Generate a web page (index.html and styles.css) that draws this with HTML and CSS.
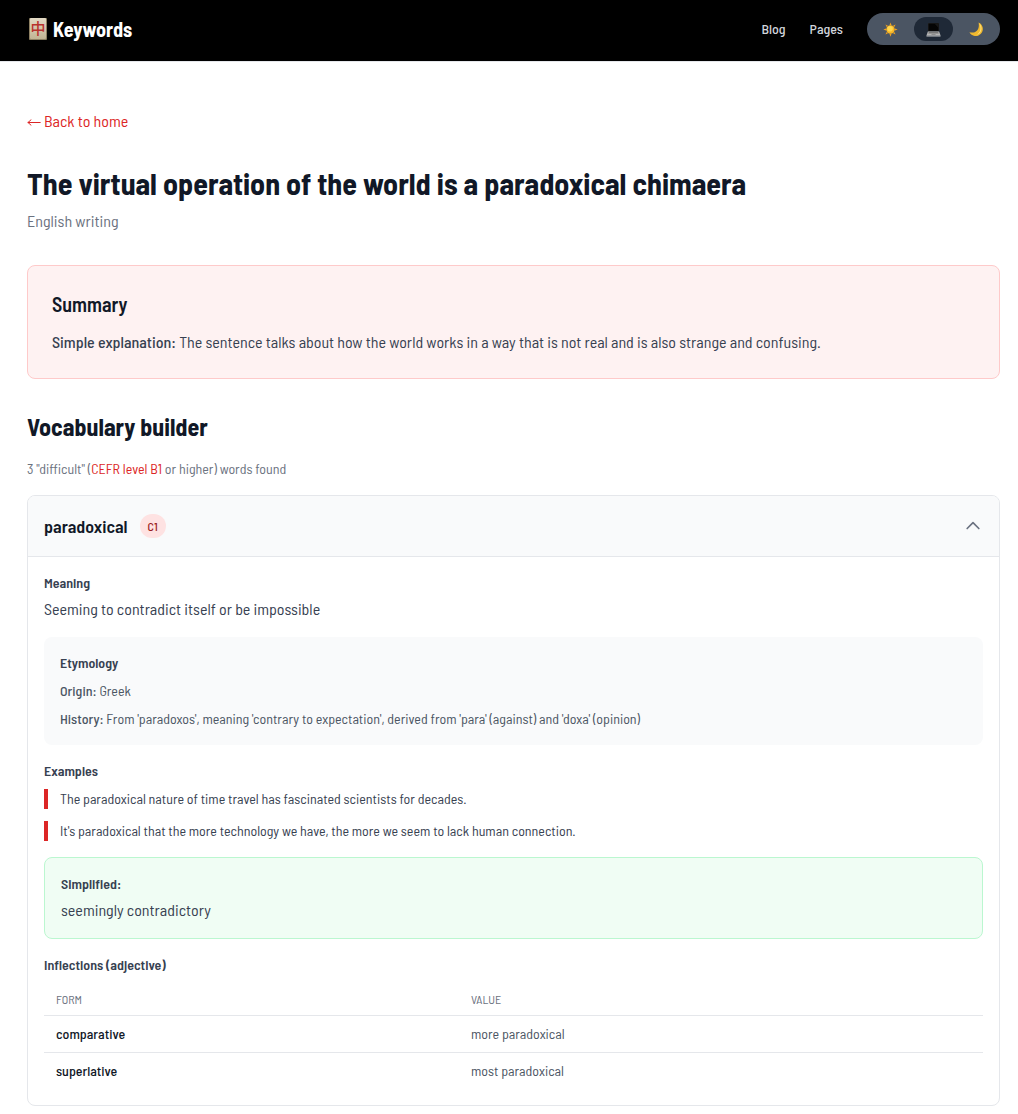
FILE: index.html
```html
<!DOCTYPE html>
<html lang="en">
<head>
    <meta charset="UTF-8">
    <meta name="viewport" content="width=device-width, initial-scale=1.0">
    <title>The virtual operation of the world is a paradoxical chimaera</title>
    <link rel="stylesheet" href="styles.css">
</head>
<body>
    <header class="site-header">
        <a href="#" class="brand">
            <svg class="brand-tile" viewBox="0 0 18 22" aria-hidden="true">
                <defs>
                    <linearGradient id="tile" x1="0" y1="0" x2="0" y2="1">
                        <stop offset="0" stop-color="#e2d9c4"/>
                        <stop offset="1" stop-color="#c2b494"/>
                    </linearGradient>
                </defs>
                <rect width="18" height="22" rx="1" fill="#8d8063"/>
                <rect x="1" width="16" height="21" rx="1" fill="url(#tile)"/>
                <text x="9" y="16" text-anchor="middle" class="tile-text">中</text>
            </svg>
            <span>Keywords</span>
        </a>
        <nav class="nav">
            <a href="#">Blog</a>
            <a href="#">Pages</a>
            <div class="theme-toggle">
                <button type="button" aria-label="Light theme">
                    <svg viewBox="0 0 16 16" aria-hidden="true">
                        <g fill="#f2a01c">
                            <path d="M8 .4l1 2.8H7zM8 15.6l1-2.8H7zM.4 8l2.8 1V7zM15.6 8l-2.8 1V7z"/>
                            <path d="M2.6 2.6l2.7 1.3-1.4 1.4zM13.4 2.6l-1.3 2.7-1.4-1.4zM2.6 13.4l1.3-2.7 1.4 1.4zM13.4 13.4l-2.7-1.3 1.4-1.4z"/>
                        </g>
                        <circle cx="8" cy="8" r="4.5" fill="#f9b625"/>
                        <circle cx="7.5" cy="7.2" r="3" fill="#ffd84e"/>
                    </svg>
                </button>
                <button type="button" class="active" aria-label="System theme" aria-pressed="true">
                    <svg viewBox="0 0 16 16" aria-hidden="true">
                        <rect x="2" y="1" width="12" height="9" rx="1" fill="#303030"/>
                        <rect x="2.5" y="1.5" width="11" height="8" fill="#050505"/>
                        <path d="M9 1.5h4.5v5z" fill="#181818"/>
                        <path d="M2 10h12l1.5 4.5H.5z" fill="#b5b5b5"/>
                        <path d="M3 10.6h10l.6 1.7H2.4z" fill="#777"/>
                        <path d="M6 12.9h4l.3 1H5.7z" fill="#8e8e8e"/>
                        <path d="M.5 14.5h15v.9H.5z" fill="#dadada"/>
                    </svg>
                </button>
                <button type="button" aria-label="Dark theme">
                    <svg viewBox="0 0 16 16" aria-hidden="true">
                        <path d="M10.2.6a7.5 7.5 0 1 1-9.7 10.2c5.7 2.1 11.4-2.2 9.7-10.2z" fill="#f0b92f"/>
                        <path d="M10.8 1.3c4.4 4 2.7 11.3-3 12.5 4.8-2.7 5.7-7.3 3-12.5z" fill="#ffe486"/>
                    </svg>
                </button>
            </div>
        </nav>
    </header>

    <main class="content">
        <a href="#" class="back-link">
            <svg viewBox="0 0 14 10" fill="none" stroke="currentColor" aria-hidden="true">
                <path d="M.8 6.5h12.8M4 3.5q-1 2-3.200 3 2.200 1 3.200 3"/>
            </svg>
            Back to home
        </a>
        <h1>The virtual operation of the world is a paradoxical chimaera</h1>
        <p class="category">English writing</p>

        <section class="summary">
            <h2>Summary</h2>
            <p><strong>Simple explanation:</strong> The sentence talks about how the world works in a way that is not real and is also strange and confusing.</p>
        </section>

        <h2 class="section-title">Vocabulary builder</h2>
        <p class="word-count">3 "difficult" (<a href="#">CEFR level B1</a> or higher) words found</p>

        <article class="word-card">
            <button type="button" class="word-header" aria-expanded="true" aria-controls="paradoxical">
                <span class="word">paradoxical</span>
                <span class="level">C1</span>
                <svg class="chevron" viewBox="0 0 24 24" fill="none" stroke="currentColor" stroke-width="2" stroke-linecap="round" stroke-linejoin="round" aria-hidden="true">
                    <path d="M5 15l7-7 7 7"/>
                </svg>
            </button>
            <div class="word-body" id="paradoxical">
                <section>
                    <h3>Meaning</h3>
                    <p>Seeming to contradict itself or be impossible</p>
                </section>

                <section class="etymology">
                    <h3>Etymology</h3>
                    <p><strong>Origin:</strong> Greek</p>
                    <p><strong>History:</strong> From 'paradoxos', meaning 'contrary to expectation', derived from 'para' (against) and 'doxa' (opinion)</p>
                </section>

                <section class="examples">
                    <h3>Examples</h3>
                    <ul>
                        <li>The paradoxical nature of time travel has fascinated scientists for decades.</li>
                        <li>It's paradoxical that the more technology we have, the more we seem to lack human connection.</li>
                    </ul>
                </section>

                <section class="simplified">
                    <h3>Simplified:</h3>
                    <p>seemingly contradictory</p>
                </section>

                <section class="inflections">
                    <h3>Inflections (adjective)</h3>
                    <table>
                        <thead>
                            <tr><th scope="col">Form</th><th scope="col">Value</th></tr>
                        </thead>
                        <tbody>
                            <tr><th scope="row">comparative</th><td>more paradoxical</td></tr>
                            <tr><th scope="row">superlative</th><td>most paradoxical</td></tr>
                        </tbody>
                    </table>
                </section>
            </div>
        </article>
    </main>
</body>
</html>
```
FILE: styles.css
```css
* {
    box-sizing: border-box;
}

body {
    margin: 0;
    font-family: "Barlow Semi Condensed", "DejaVu Sans", sans-serif;
    font-size: 16px;
    line-height: 24px;
    color: #374151;
    background-color: #fff;
}

h1, h2, h3, p, ul {
    margin: 0;
    padding: 0;
}

a {
    color: #dc2626;
    text-decoration: none;
}

button {
    font: inherit;
    border: none;
    cursor: pointer;
}

strong {
    font-weight: 500;
}

/* Header */
.site-header {
    display: flex;
    justify-content: space-between;
    align-items: center;
    min-height: 62px;
    padding: 12px 18px 15px 29px;
    background-color: #000;
    border-bottom: 1px solid #e5e7eb;
}

.brand {
    display: flex;
    align-items: center;
    gap: 6px;
    color: #fff;
    font-size: 20px;
    font-weight: 700;
}

.brand-tile {
    width: 18px;
    height: 22px;
}

.tile-text {
    font-family: "Noto Sans CJK SC", sans-serif;
    font-size: 15px;
    font-weight: 500;
    fill: #b8322d;
}

.nav {
    display: flex;
    align-items: center;
    gap: 24px;
    font-size: 14px;
}

.nav a {
    color: #d1d5db;
    font-weight: 500;
}

.theme-toggle {
    display: flex;
    gap: 4px;
    padding: 4px;
    border-radius: 16px;
    background-color: #4b5563;
}

.theme-toggle button {
    display: flex;
    justify-content: center;
    align-items: center;
    width: 39px;
    height: 24px;
    padding: 0;
    border-radius: 12px;
    background: none;
}

.theme-toggle .active {
    background-color: #1f2937;
}

.theme-toggle svg {
    width: 15px;
    height: 15px;
}

/* Page */
.content {
    padding: 47px 18px 8px 27px;
}

.back-link {
    display: flex;
    align-items: center;
    gap: 3px;
    width: fit-content;
}

.back-link svg {
    width: 14px;
    height: 10px;
}

h1 {
    margin-top: 32px;
    font-size: 30px;
    line-height: 36px;
    color: #111827;
}

.category {
    margin-top: 8px;
    color: #6b7280;
}

.summary {
    margin-top: 32px;
    padding: 24px;
    border: 1px solid #fecaca;
    border-radius: 8px;
    background-color: #fef2f2;
}

.summary h2 {
    margin-bottom: 12px;
    font-size: 20px;
    line-height: 28px;
    font-weight: 600;
    color: #111827;
}

.section-title {
    margin: 32px 0 16px;
    font-size: 24px;
    line-height: 32px;
    color: #111827;
}

.word-count {
    margin-bottom: 16px;
    font-size: 14px;
    line-height: 20px;
    color: #6b7280;
}

/* Word card */
.word-card {
    border: 1px solid #e5e7eb;
    border-radius: 8px;
    overflow: hidden;
}

.word-header {
    display: flex;
    align-items: center;
    gap: 12px;
    width: 100%;
    padding: 16px;
    background-color: #f9fafb;
    border-bottom: 1px solid #e5e7eb;
    text-align: left;
}

.word {
    font-size: 18px;
    line-height: 28px;
    font-weight: 600;
    color: #111827;
}

.level {
    padding: 4px 8px;
    border-radius: 12px;
    background-color: #fee2e2;
    color: #991b1b;
    font-size: 12px;
    line-height: 16px;
    font-weight: 500;
}

.chevron {
    width: 20px;
    height: 20px;
    margin-left: auto;
    color: #6b7280;
}

.word-body {
    display: flex;
    flex-direction: column;
    gap: 16px;
    padding: 16px;
}

h3 {
    margin-bottom: 4px;
    font-size: 14px;
    line-height: 20px;
    font-weight: 600;
}

.etymology {
    display: flex;
    flex-direction: column;
    gap: 8px;
    padding: 16px;
    border-radius: 8px;
    background-color: #f9fafb;
    font-size: 14px;
    line-height: 20px;
    color: #4b5563;
}

.etymology h3 {
    margin-bottom: 0;
    color: #374151;
}

.examples h3,
.inflections h3 {
    margin-bottom: 8px;
}

.examples ul {
    display: flex;
    flex-direction: column;
    gap: 12px;
    list-style: none;
}

.examples li {
    padding-left: 12px;
    border-left: 4px solid #dc2626;
    font-size: 14px;
    line-height: 20px;
}

.simplified {
    padding: 16px;
    border: 1px solid #bbf7d0;
    border-radius: 8px;
    background-color: #f0fdf4;
}

table {
    width: 100%;
    table-layout: fixed;
    border-spacing: 0;
    font-size: 14px;
    line-height: 20px;
    text-align: left;
}

th, td {
    padding: 8px 12px;
}

tr:not(:last-child) > *,
thead th {
    border-bottom: 1px solid #e5e7eb;
}

thead th {
    font-size: 12px;
    line-height: 16px;
    font-weight: 400;
    text-transform: uppercase;
    color: #6b7280;
}

thead th:first-child {
    width: 44.2%;
}

tbody th {
    font-weight: 500;
    color: #111827;
}

td {
    color: #4b5563;
}
```
